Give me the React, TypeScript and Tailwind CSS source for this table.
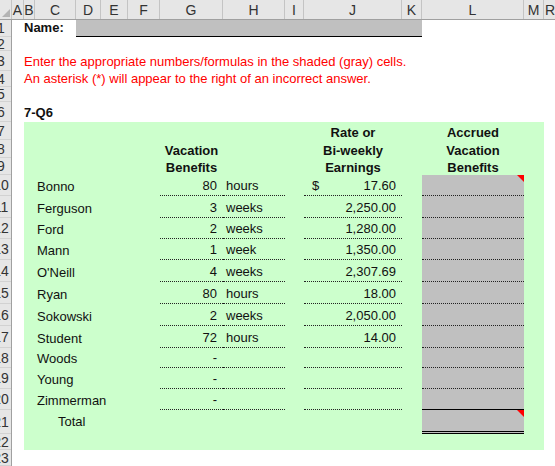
import React from "react";

const FONT = { fontFamily: '"Liberation Sans", Arial, sans-serif' };

// row heights, rows 1..23
const rowH = [
  "h-[17px]", "h-[14px]", "h-[20px]", "h-[16px]", "h-[15px]", "h-[20px]",
  "h-[18px]", "h-[18px]", "h-[17px]",
  "h-[21px]", "h-[22px]", "h-[21px]", "h-[21px]", "h-[22px]", "h-[22px]",
  "h-[22px]", "h-[22px]", "h-[20px]", "h-[21px]", "h-[21px]",
  "h-[24px]", "h-[16px]", "h-[16px]",
];

const cols: [string, string][] = [
  ["A", "w-[12px]"], ["B", "w-[11px]"], ["C", "w-[41px]"], ["D", "w-[25px]"],
  ["E", "w-[27px]"], ["F", "w-[32px]"], ["G", "w-[63px]"], ["H", "w-[62px]"],
  ["I", "w-[19px]"], ["J", "w-[98px]"], ["K", "w-[20px]"], ["L", "w-[102px]"],
  ["M", "w-[20px]"],
];

const people = [
  { name: "Bonno", qty: "80", unit: "hours", rate: "17.60", dollar: true },
  { name: "Ferguson", qty: "3", unit: "weeks", rate: "2,250.00" },
  { name: "Ford", qty: "2", unit: "weeks", rate: "1,280.00" },
  { name: "Mann", qty: "1", unit: "week", rate: "1,350.00" },
  { name: "O'Neill", qty: "4", unit: "weeks", rate: "2,307.69" },
  { name: "Ryan", qty: "80", unit: "hours", rate: "18.00" },
  { name: "Sokowski", qty: "2", unit: "weeks", rate: "2,050.00" },
  { name: "Student", qty: "72", unit: "hours", rate: "14.00" },
  { name: "Woods", qty: "-", unit: "", rate: "" },
  { name: "Young", qty: "-", unit: "", rate: "" },
  { name: "Zimmerman", qty: "-", unit: "", rate: "" },
];

const cell = "flex items-end pb-[2px] leading-[15px] whitespace-nowrap";
const head = "flex items-end leading-[15px] whitespace-nowrap justify-center font-bold";
const dotted = "border-b border-dotted border-[#222]";

function Flag() {
  return (
    <svg className="absolute top-0 right-0" width="7" height="7" viewBox="0 0 7 7">
      <polygon points="0,0 7,0 7,7" fill="#ff0000" />
    </svg>
  );
}

function TopRow({ h, children }: { h: string; children?: React.ReactNode }) {
  return (
    <div className={`grid grid-cols-[12px_11px_41px_25px_27px_32px_63px_62px_19px_98px_20px_102px_20px] ${h}`}>
      {children}
    </div>
  );
}

function GreenRow({ h, children }: { h: string; children?: React.ReactNode }) {
  return (
    <div className={`grid grid-cols-[11px_41px_25px_27px_32px_63px_62px_19px_98px_20px_102px_20px] ${h}`}>
      {children}
    </div>
  );
}

export default function App() {
  return (
    <div className="w-[555px] h-[466px] overflow-hidden bg-white text-[13px] text-[#111]" style={FONT}>
      {/* column headers */}
      <div className="flex h-[20px] bg-[#e6e6e6] border-b border-[#a0a0a0] text-[14px] text-[#333]">
        <div className="w-[12px] shrink-0 border-r border-[#c4c4c4] relative">
          <svg className="absolute bottom-[2px] right-[1px]" width="8" height="8" viewBox="0 0 8 8">
            <polygon points="8,0 8,8 0,8" fill="#b4b4b4" />
          </svg>
        </div>
        {cols.map(([l, w]) => (
          <div key={l} className={`${w} shrink-0 border-r border-[#c4c4c4] flex items-center justify-center leading-none`}>
            {l}
          </div>
        ))}
        <div className="flex-1 flex items-center pl-[1px] leading-none">R</div>
      </div>

      <div className="flex">
        {/* row headers */}
        <div className="w-[12px] shrink-0 bg-[#e6e6e6] border-r border-[#a0a0a0] overflow-hidden text-[14px] text-[#333]">
          {rowH.map((h, i) => (
            <div key={i} className={`${h} border-b border-[#d2d2d2] flex items-center`}>
              <div className="w-[26px] -ml-[12px] shrink-0 text-center leading-none">{i + 1}</div>
            </div>
          ))}
        </div>

        {/* sheet */}
        <div className="w-[543px]">
          <TopRow h={rowH[0]}>
            <div className={`${cell} col-start-2 font-bold`}>Name:</div>
            <div className="col-start-4 col-span-8 bg-[#c0c0c0] border-b border-black" />
          </TopRow>
          <TopRow h={rowH[1]} />
          <TopRow h={rowH[2]}>
            <div className={`${cell} col-start-2 col-span-12 text-[#ff0000]`}>
              Enter the appropriate numbers/formulas in the shaded (gray) cells.
            </div>
          </TopRow>
          <TopRow h={rowH[3]}>
            <div className={`${cell} col-start-2 col-span-12 text-[#ff0000]`}>
              An asterisk (*) will appear to the right of an incorrect answer.
            </div>
          </TopRow>
          <TopRow h={rowH[4]} />
          <TopRow h={rowH[5]}>
            <div className={`${cell} col-start-2 col-span-4 font-bold`}>7-Q6</div>
          </TopRow>

          {/* green problem area */}
          <div className="ml-[12px] w-[520px] bg-[#ccffcc]">
            <GreenRow h={rowH[6]}>
              <div className={`${head} col-start-9`}>Rate or</div>
              <div className={`${head} col-start-11`}>Accrued</div>
            </GreenRow>
            <GreenRow h={rowH[7]}>
              <div className={`${head} col-start-6`}>Vacation</div>
              <div className={`${head} col-start-9`}>Bi-weekly</div>
              <div className={`${head} col-start-11`}>Vacation</div>
            </GreenRow>
            <GreenRow h={rowH[8]}>
              <div className={`${head} col-start-6`}>Benefits</div>
              <div className={`${head} col-start-9`}>Earnings</div>
              <div className={`${head} col-start-11`}>Benefits</div>
            </GreenRow>

            {people.map((p, i) => (
              <GreenRow key={p.name} h={rowH[9 + i]}>
                <div className={`${cell} col-start-2 col-span-4 pl-[2px]`}>{p.name}</div>
                <div className={`${cell} ${dotted} col-start-6 justify-end pr-[6px]`}>{p.qty}</div>
                <div className={`${cell} ${dotted} col-start-7 pl-[3px]`}>{p.unit}</div>
                <div className={`${cell} ${dotted} col-start-9 justify-between pl-[8px] pr-[6px]`}>
                  <span>{p.dollar ? "$" : ""}</span>
                  <span>{p.rate}</span>
                </div>
                <div
                  className={`col-start-11 relative bg-[#c0c0c0] ${
                    i === people.length - 1 ? "border-b border-black" : dotted
                  }`}
                >
                  {i === 0 && <Flag />}
                </div>
              </GreenRow>
            ))}

            <GreenRow h={rowH[20]}>
              <div className="flex items-end pb-[5px] leading-[15px] whitespace-nowrap col-start-2 col-span-4 pl-[23px]">
                Total
              </div>
              <div className="col-start-11 relative bg-[#c0c0c0] border-b-[3px] border-double border-black">
                <Flag />
              </div>
            </GreenRow>
            <GreenRow h={rowH[21]} />
          </div>
        </div>
      </div>
    </div>
  );
}
